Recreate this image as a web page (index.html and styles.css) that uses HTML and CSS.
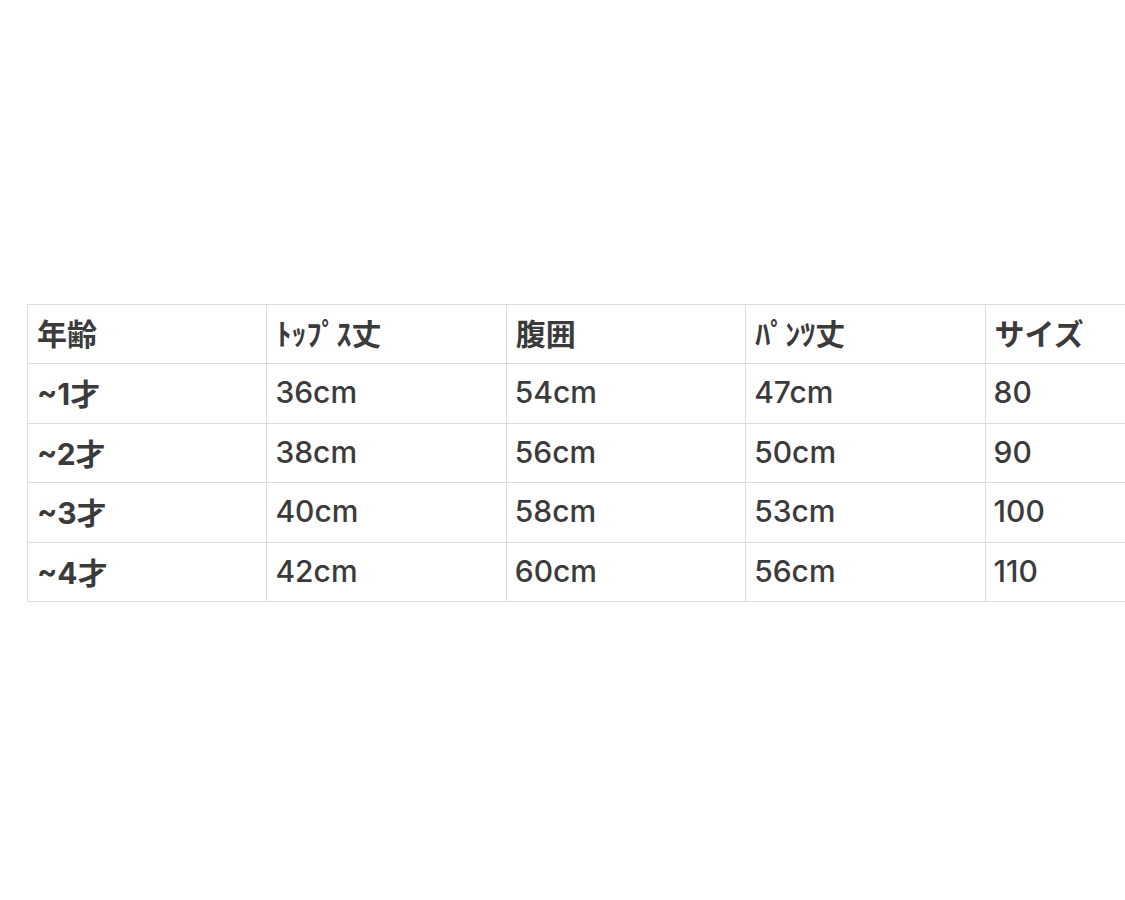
FILE: index.html
```html
<!DOCTYPE html>
<html lang="ja">
<head>
<meta charset="utf-8">
<link rel="stylesheet" href="styles.css">
</head>
<body>
<main class="page">
  <table class="size-table">
    <thead>
      <tr>
        <th>年齢</th>
        <th>ﾄｯﾌﾟｽ丈</th>
        <th>腹囲</th>
        <th>ﾊﾟﾝﾂ丈</th>
        <th>サイズ</th>
      </tr>
    </thead>
    <tbody>
      <tr><th>~1才</th><td>36cm</td><td>54cm</td><td>47cm</td><td>80</td></tr>
      <tr><th>~2才</th><td>38cm</td><td>56cm</td><td>50cm</td><td>90</td></tr>
      <tr><th>~3才</th><td>40cm</td><td>58cm</td><td>53cm</td><td>100</td></tr>
      <tr><th>~4才</th><td>42cm</td><td>60cm</td><td>56cm</td><td>110</td></tr>
    </tbody>
  </table>
</main>
</body>
</html>
```
FILE: styles.css
```css
html, body {
  margin: 0;
  padding: 0;
  background: #ffffff;
  overflow: hidden;
}
.page {
  min-height: 100vh;
  display: flex;
  align-items: center;
  padding-left: 27px;
  padding-top: 6px;
  box-sizing: border-box;
}
.size-table {
  flex: none;
  width: 1198px;
  table-layout: fixed;
  border-collapse: collapse;
  font-family: Inter, "Noto Sans CJK JP", sans-serif;
  font-size: 30px;
  color: #3b3b3b;
}
.size-table th,
.size-table td {
  border: 1px solid #dcdcdc;
  height: 59.6px;
  padding: 0 8px 3px 9px;
  text-align: left;
  vertical-align: middle;
  box-sizing: border-box;
}
.size-table th {
  font-weight: 700;
}
.size-table td {
  font-weight: 500;
  padding-left: 8px;
}
```
